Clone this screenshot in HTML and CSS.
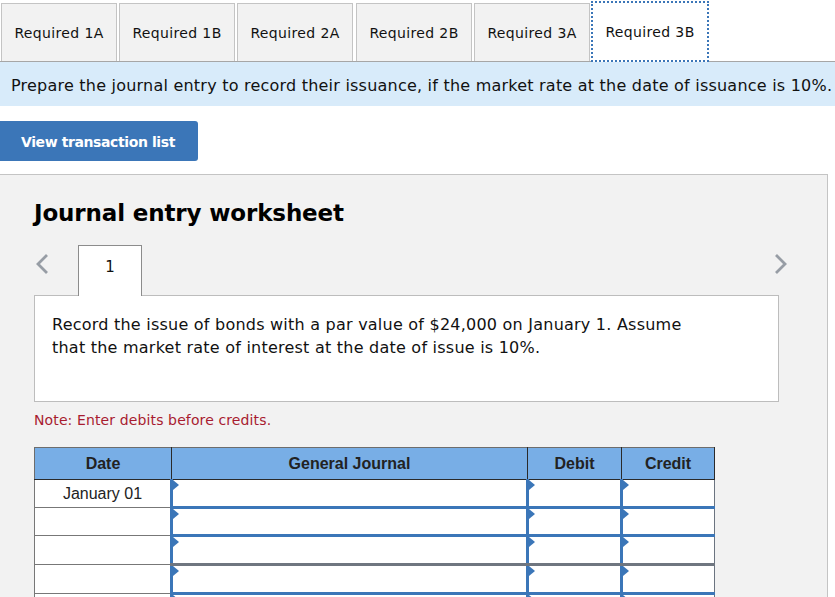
FILE: index.html
```html
<!DOCTYPE html>
<html lang="en">
<head>
<meta charset="utf-8">
<title>Journal entry worksheet</title>
<link rel="stylesheet" href="styles.css">
</head>
<body>
<nav class="tabs">
  <div class="tab">Required 1A</div>
  <div class="tab">Required 1B</div>
  <div class="tab">Required 2A</div>
  <div class="tab">Required 2B</div>
  <div class="tab">Required 3A</div>
  <div class="tab active">Required 3B</div>
</nav>
<div class="band">Prepare the journal entry to record their issuance, if the market rate at the date of issuance is 10%.</div>
<button class="view-btn">View transaction list</button>
<section class="panel">
  <h2 class="title">Journal entry worksheet</h2>
  <div class="pager">
    <svg class="chev" width="16" height="20" viewBox="0 0 16 20"><path d="M13 1 L4 10 L13 19" fill="none" stroke="#979da5" stroke-width="2.8"/></svg>
    <div class="page-tab">1</div>
    <svg class="chev next" width="16" height="20" viewBox="0 0 16 20"><path d="M3 1 L12 10 L3 19" fill="none" stroke="#979da5" stroke-width="2.8"/></svg>
  </div>
  <div class="desc">Record the issue of bonds with a par value of $24,000 on January 1. Assume that the market rate of interest at the date of issue is 10%.</div>
  <p class="note">Note: Enter debits before credits.</p>
  <table class="journal">
    <thead>
      <tr><th class="c-date">Date</th><th class="c-gj">General Journal</th><th class="c-dr">Debit</th><th class="c-cr">Credit</th></tr>
    </thead>
    <tbody>
      <tr class="r1"><td class="date">January 01</td><td class="in"></td><td class="in"></td><td class="in"></td></tr>
      <tr class="r2"><td class="date"></td><td class="in"></td><td class="in"></td><td class="in"></td></tr>
      <tr class="r3 grey"><td class="date"></td><td class="in"></td><td class="in"></td><td class="in"></td></tr>
      <tr class="r3"><td class="date"></td><td class="in"></td><td class="in"></td><td class="in"></td></tr>
      <tr class="r3"><td class="date"></td><td class="in"></td><td class="in"></td><td class="in"></td></tr>
    </tbody>
  </table>
</section>
</body>
</html>
```
FILE: styles.css
```css
* { box-sizing: border-box; }
html, body { margin: 0; padding: 0; height: 597px; overflow: hidden; background: #fff; }
body { font-family: "DejaVu Sans", Verdana, sans-serif; font-size: 15px; color: #111; }

.tabs { display: flex; height: 62px; padding: 3px 0 0 1px; gap: 2px; border-bottom: 1px solid #a6a6a6; }
.tab { width: 116px; height: 58px; background: #f2f2f2; border: 1px solid #c4c4c4; border-bottom: 0; display: flex; align-items: center; justify-content: center; font-size: 14px; letter-spacing: 0.36px; }
.tab:nth-child(3) { margin-right: 1px; }
.tab.active { width: 118px; height: 61px; margin: -2px 0 -1px -1px; background: #fff; border: 2px dotted #3b76b8; padding-top: 1px; }

.band { height: 44px; background: #d8ebfa; display: flex; align-items: center; padding: 2px 0 0 11px; font-size: 16px; letter-spacing: 0.22px; white-space: nowrap; }

.view-btn { display: block; margin-top: 15px; width: 198px; height: 40px; background: #3b76b8; color: #fff; border: 0; border-radius: 0 3px 3px 0; font: bold 14px "DejaVu Sans", Verdana, sans-serif; letter-spacing: -0.4px; padding: 1px 0 0 21px; text-align: left; }

.panel { margin-top: 13px; width: 828px; height: 460px; background: #f2f2f2; border: 1px solid #c4c4c4; border-left: 0; padding: 0 0 0 34px; }
.title { margin: 23px 0 0; font-size: 23px; letter-spacing: -0.14px; line-height: 30px; font-weight: bold; color: #000; }

.pager { display: flex; align-items: flex-start; margin-top: 17px; width: 755px; height: 50px; position: relative; }
.chev { margin-top: 9px; }
.chev.next { margin-left: auto; }
.page-tab { margin: 0 auto 0 28px; width: 64px; height: 51px; background: #fff; border: 1px solid #8c8c8c; border-bottom: 0; text-align: center; padding-top: 12px; font-size: 15px; position: relative; z-index: 1; }

.desc { width: 745px; height: 107px; background: #fff; border: 1px solid #bdbdbd; padding: 18px 80px 0 17px; font-size: 16px; letter-spacing: 0.23px; line-height: 22.5px; }
.note { margin: 9px 0 0; font-size: 14px; letter-spacing: 0.12px; line-height: 18px; color: #a81c30; }

.journal { margin-top: 18px; width: 680px; table-layout: fixed; border-collapse: collapse; font-family: "Liberation Sans", Arial, sans-serif; font-size: 16px; }
.journal th { height: 32px; background: #78aee6; border: 1px solid #2a2a2a; border-top-color: #6d6d6d; color: #222; font-weight: bold; padding: 0; }
.journal th:first-child { border-left-color: #6d6d6d; }
.c-date { width: 137px; }
.c-gj { width: 356px; }
.c-dr { width: 94px; }
.c-cr { width: 93px; }
.journal td { background: #fff; padding: 0; }
.r1 td { height: 28px; }
.r2 td { height: 28px; }
.r3 td { height: 29px; }
.date { border: 1px solid #777; text-align: center; color: #222; }
.in { border: 1px solid #6b7480; border-top: 3px solid #3b76b8; border-left: 3px solid #3b76b8; border-bottom: 3px solid #3b76b8; position: relative; }
.r1 .in { border-top: 1px solid #2a2a2a; }
.grey .in { border-bottom-color: #6f7680; }
.in::before { content: ""; position: absolute; left: 0; top: 0; border-left: 6px solid #3b76b8; border-top: 5px solid transparent; border-bottom: 5px solid transparent; }
```
